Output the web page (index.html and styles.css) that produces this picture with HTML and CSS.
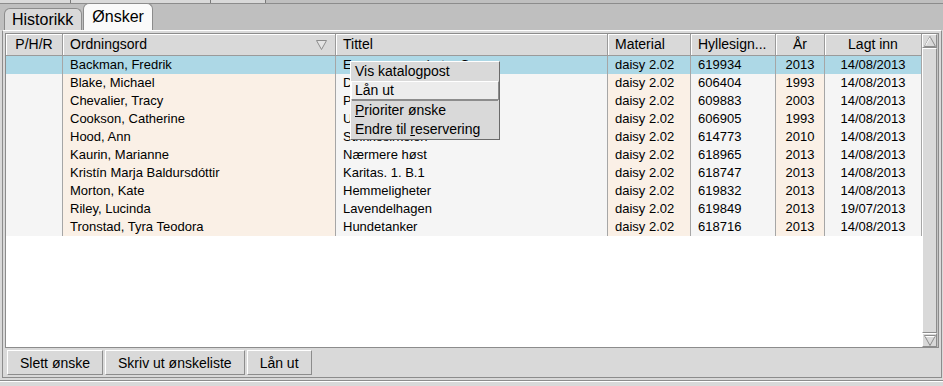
FILE: index.html
```html
<!DOCTYPE html>
<html>
	<head>
		<meta charset="UTF-8">
		<title>Ønsker</title>
		<link rel="stylesheet" href="styles.css">
	</head>
	<body>
		<div class="top">
			<span class="t1"></span><span class="t2"></span><span class="t3"></span>
		</div>
		<div class="tabbar">
			<div class="tab">Historikk</div>
			<div class="tab on">Ønsker</div>
		</div>
		<div class="pane">
			<div class="tree">
				<div class="list">
					<div class="row head">
						<div class="c mid">P/H/R</div>
						<div class="c sort">Ordningsord
							<svg width="11" height="10" viewBox="0 0 11 10"><polygon points="0.5,0.5 10.5,0.5 5.5,9.5" fill="#e4e4e4" stroke="#8c8c8c"/></svg>
						</div>
						<div class="c">Tittel</div>
						<div class="c">Material</div>
						<div class="c">Hyllesign...</div>
						<div class="c mid">År</div>
						<div class="c mid">Lagt inn</div>
					</div>
					<div class="row sel">
						<div class="c"></div><div class="c">Backman, Fredrik</div><div class="c">En mann som heter Ove</div><div class="c">daisy 2.02</div><div class="c">619934</div><div class="c mid">2013</div><div class="c mid">14/08/2013</div>
					</div>
					<div class="row">
						<div class="c"></div><div class="c">Blake, Michael</div><div class="c">Danser med ulver</div><div class="c">daisy 2.02</div><div class="c">606404</div><div class="c mid">1993</div><div class="c mid">14/08/2013</div>
					</div>
					<div class="row">
						<div class="c"></div><div class="c">Chevalier, Tracy</div><div class="c">Piken med perleøredobben</div><div class="c">daisy 2.02</div><div class="c">609883</div><div class="c mid">2003</div><div class="c mid">14/08/2013</div>
					</div>
					<div class="row">
						<div class="c"></div><div class="c">Cookson, Catherine</div><div class="c">Ulykkesfuglen</div><div class="c">daisy 2.02</div><div class="c">606905</div><div class="c mid">1993</div><div class="c mid">14/08/2013</div>
					</div>
					<div class="row">
						<div class="c"></div><div class="c">Hood, Ann</div><div class="c">Strikkesirkelen</div><div class="c">daisy 2.02</div><div class="c">614773</div><div class="c mid">2010</div><div class="c mid">14/08/2013</div>
					</div>
					<div class="row">
						<div class="c"></div><div class="c">Kaurin, Marianne</div><div class="c">Nærmere høst</div><div class="c">daisy 2.02</div><div class="c">618965</div><div class="c mid">2013</div><div class="c mid">14/08/2013</div>
					</div>
					<div class="row">
						<div class="c"></div><div class="c">Kristín Marja Baldursdóttir</div><div class="c">Karitas. 1. B.1</div><div class="c">daisy 2.02</div><div class="c">618747</div><div class="c mid">2013</div><div class="c mid">14/08/2013</div>
					</div>
					<div class="row">
						<div class="c"></div><div class="c">Morton, Kate</div><div class="c">Hemmeligheter</div><div class="c">daisy 2.02</div><div class="c">619832</div><div class="c mid">2013</div><div class="c mid">14/08/2013</div>
					</div>
					<div class="row">
						<div class="c"></div><div class="c">Riley, Lucinda</div><div class="c">Lavendelhagen</div><div class="c">daisy 2.02</div><div class="c">619849</div><div class="c mid">2013</div><div class="c mid">19/07/2013</div>
					</div>
					<div class="row">
						<div class="c"></div><div class="c">Tronstad, Tyra Teodora</div><div class="c">Hundetanker</div><div class="c">daisy 2.02</div><div class="c">618716</div><div class="c mid">2013</div><div class="c mid">14/08/2013</div>
					</div>
				</div>
				<div class="scroll">
					<div class="arr">
						<svg width="12" height="11" viewBox="0 0 12 11"><polygon points="6,0.5 11.5,10.5 0.5,10.5" fill="#d9d9d9" stroke="#8c8c8c"/><line x1="1.5" y1="9.5" x2="6" y2="1.5" stroke="#fff"/></svg>
					</div>
					<div class="thumb"></div>
					<div class="arr">
						<svg width="12" height="11" viewBox="0 0 12 11"><polygon points="0.5,0.5 11.5,0.5 6,10.5" fill="#d9d9d9" stroke="#8c8c8c"/><line x1="1.5" y1="1.5" x2="10.5" y2="1.5" stroke="#fff"/></svg>
					</div>
				</div>
			</div>
			<div class="buttons">
				<button class="btn">Slett ønske</button>
				<button class="btn">Skriv ut ønskeliste</button>
				<button class="btn">Lån ut</button>
			</div>
		</div>
		<div class="foot"></div>

		<!-- høyreklikkmeny over første rad -->
		<div class="menu">
			<div class="mi">Vis katalogpost</div>
			<div class="mi act">Lån ut</div>
			<div class="sep"></div>
			<div class="mi"><u>P</u>rioriter ønske</div>
			<div class="mi">Endre til <u>r</u>eservering</div>
		</div>
	</body>
</html>
```

FILE: styles.css
```css
*{
	margin: 0;
	padding: 0;
	box-sizing: border-box;
}
body{
	width: 943px;
	height: 386px;
	overflow: hidden;
	position: relative;
	background: #d9d9d9;
	font-family: "Liberation Sans", Arial, sans-serif;
	font-size: 13px;
	color: #000;
}
/* rest av fanene i vinduet over */
.top{
	display: flex;
	height: 4px;
	background: #bfbfbf;
	border-bottom: 1px solid #8c8c8c;
}
.top span{
	height: 3px;
	background: #d9d9d9;
	border-right: 1px solid #7a7a7a;
}
.top .t1{ width: 71px; }
.top .t2{ width: 140px; }
.top .t3{ width: 55px; }

.tabbar{
	display: flex;
	align-items: flex-end;
	height: 26px;
	padding-left: 4px;
	background: #bfbfbf;
}
.tab{
	height: 22px;
	padding: 0 8px 0 7px;
	border: 1px solid #8c8c8c;
	border-bottom: none;
	border-radius: 6px 6px 0 0;
	background: #d9d9d9;
	font-size: 16px;
	line-height: 21px;
}
.tab.on{
	height: 27px;
	margin-left: 1px;
	padding: 0 8px;
	background: #fafafa;
	line-height: 25px;
}

.pane{
	margin: 0 1px 0 2px;
	padding: 2px 2px 2px;
	border: 1px solid;
	border-color: #fff #8c8c8c #8c8c8c #8c8c8c;
	background: #d9d9d9;
}
.tree{
	display: flex;
	height: 315px;
	border: 1px solid #8c8c8c;
	background: #fff;
}
.list{
	width: 916px;
}
.row{
	display: grid;
	grid-template-columns: 57px 273px 272px 83px 85px 49px 97px;
	height: 18px;
}
.row .c{
	padding: 0 6px 0 7px;
	line-height: 18px;
	white-space: nowrap;
	overflow: hidden;
	border-right: 1px solid #a6a6a6;
	background: #f5f5f5;
}
.row .c:nth-child(2n){
	background: #faf0e6;
}
.row .mid{
	text-align: center;
	padding: 0;
}
.row.sel .c{
	background: #add8e6;
}
.row.head{
	height: 22px;
	border-bottom: 1px solid #9a9a9a;
}
.row.head .c{
	background: #d9d9d9;
	font-size: 14px;
	line-height: 21px;
	border-right-color: #9a9a9a;
	box-shadow: inset 1px 1px 0 #fff;
}
.row.head .sort{
	display: flex;
	justify-content: space-between;
	align-items: center;
	padding-right: 8px;
}

.scroll{
	display: flex;
	flex-direction: column;
	width: 16px;
	padding: 0 1px 0 0;
	background: #c3c3c3;
}
.arr{
	height: 14px;
	display: flex;
	align-items: center;
	justify-content: center;
	background: #d9d9d9;
	border: 1px solid;
	border-color: #fff #8c8c8c #8c8c8c #fff;
}
.thumb{
	flex: 1;
	background: #d9d9d9;
	border: 1px solid;
	border-color: #fff #8c8c8c #8c8c8c #fff;
}

.buttons{
	display: flex;
	gap: 2px;
	padding: 2px 0 0 2px;
}
.btn{
	height: 25px;
	padding: 0 12px;
	border: 1px solid;
	border-color: #fff #8c8c8c #8c8c8c #fff;
	background: #d9d9d9;
	font-family: "Liberation Sans", Arial, sans-serif;
	font-size: 14px;
	color: #000;
}
.foot{
	height: 6px;
	margin-top: 2px;
	border-top: 1px solid #8c8c8c;
	box-shadow: inset 0 1px 0 #fff;
}

.menu{
	position: absolute;
	left: 350px;
	top: 61px;
	width: 150px;
	background: #d9d9d9;
	border: 1px solid;
	border-color: #fff #6a6a6a #6a6a6a #fff;
	font-size: 14px;
}
.menu .mi{
	height: 19px;
	line-height: 19px;
	padding-left: 4px;
	white-space: nowrap;
}
.menu .mi.act{
	background: #ececec;
	border: 1px solid;
	border-color: #fff #8c8c8c #8c8c8c #fff;
	padding-left: 3px;
	line-height: 17px;
}
.menu .sep{
	height: 1px;
	margin: 0 1px;
	background: #8c8c8c;
}
```
